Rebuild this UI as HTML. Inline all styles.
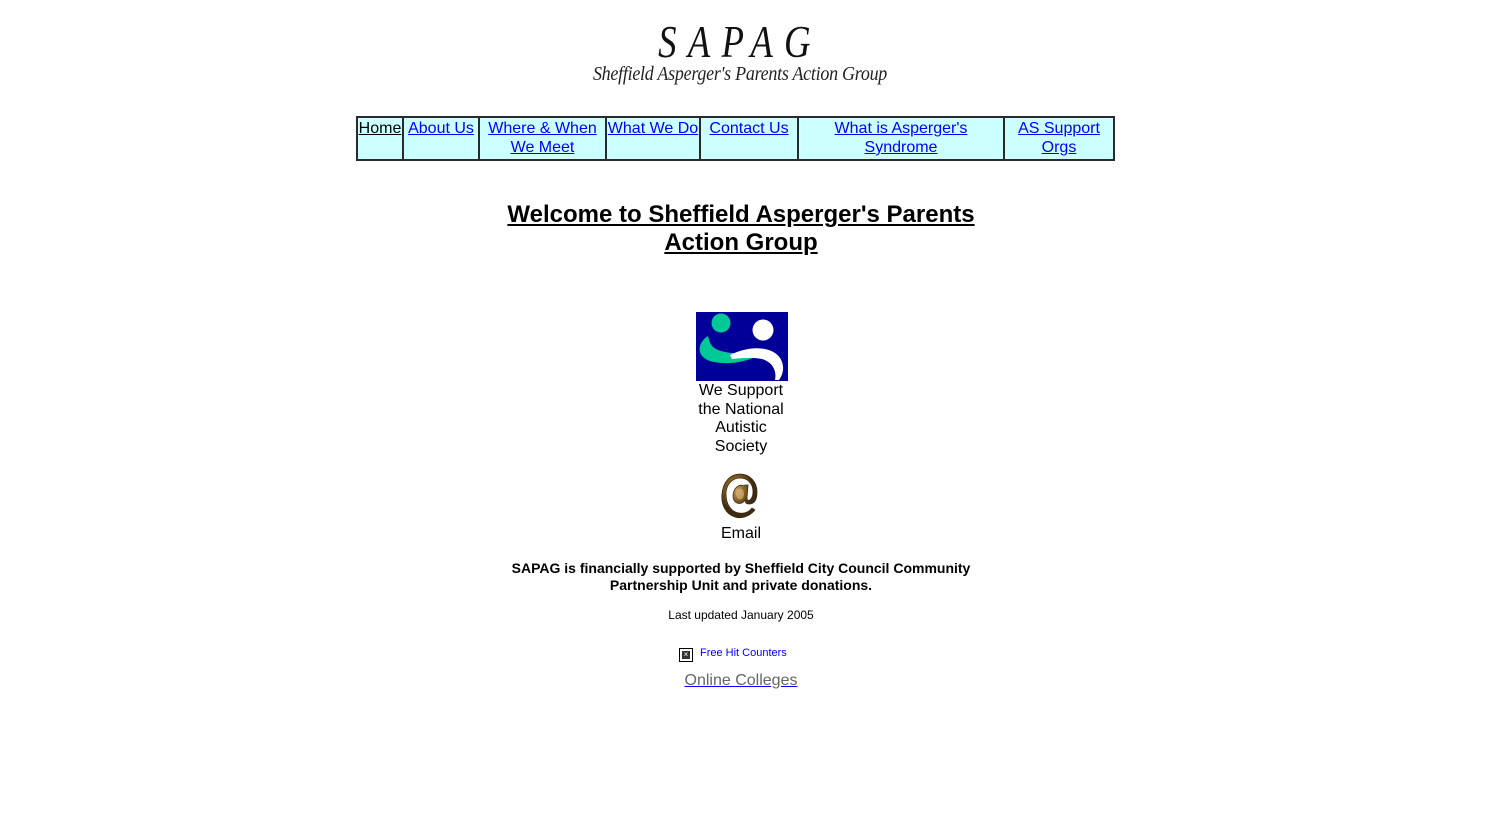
<!DOCTYPE html>
<html><head><meta charset="utf-8"><style>
body{margin:0;background:#fff;font-family:"Liberation Sans",Arial,sans-serif;width:1488px;height:825px;position:relative;overflow:hidden}
.a{position:absolute}
.c{text-align:center}
table.nav{position:absolute;left:356px;top:116px;border-collapse:collapse;background:#ccffff;height:45px}
table.nav td{border:2px solid #2a2a2a;vertical-align:top;text-align:center;font-size:16px;line-height:19px;padding:1px 0 0 0;white-space:nowrap}
table.nav a{color:#0000ff;text-decoration:underline}
</style></head><body>
<div class="a c" style="left:590px;top:14px;width:300px;font-family:'Liberation Serif',serif;font-style:italic;font-size:46px;letter-spacing:14px;line-height:56px;transform:scaleX(0.8);color:#111">SAPAG</div>
<div class="a c" style="left:550px;top:62px;width:380px;font-family:'Liberation Serif',serif;font-style:italic;font-size:20px;line-height:24px;color:#222;transform:scaleX(0.9);letter-spacing:-0.3px">Sheffield Asperger's Parents Action Group</div>
<table class="nav"><tr>
<td style="width:44px"><a style="color:#000">Home</a></td>
<td style="width:74px"><a>About Us</a></td>
<td style="width:125px"><a>Where &amp; When<br>We Meet</a></td>
<td style="width:92px"><a>What We Do</a></td>
<td style="width:96px"><a>Contact Us</a></td>
<td style="width:204px"><a>What is Asperger's<br>Syndrome</a></td>
<td style="width:108px"><a>AS Support<br>Orgs</a></td>
</tr></table>
<div class="a c" style="left:480px;top:201px;width:522px;font-weight:bold;font-size:24px;line-height:28px;text-decoration:underline">Welcome to Sheffield Asperger's Parents<br>Action Group</div>
<svg class="a" style="left:696px;top:312px" width="92" height="69" viewBox="0 0 92 69">
<rect width="92" height="69" fill="#000099"/>
<circle cx="25" cy="11" r="9.5" fill="#00c896"/>
<path d="M12 24 C2 30 -1 44 14 49 C28 53 45 51 57 46 L55 41 C40 42 24 41 17 35 C13 31 13 27 12 24 Z" fill="#00c896"/>
<circle cx="67" cy="18" r="10.5" fill="#fff"/>
<path d="M34 43 C48 36 66 33 79 41 C89 48 89 60 83 68 L79 68 C81 58 76 50 66 47 C56 45 45 46 36 47 Z" fill="#fff"/>
</svg>
<div class="a c" style="left:681px;top:382px;width:120px;font-size:16px;line-height:18.5px">We Support<br>the National<br>Autistic<br>Society</div>
<svg class="a" style="left:719px;top:472px" width="42" height="48" viewBox="0 0 42 48">
<defs><radialGradient id="g" cx="0.4" cy="0.35"><stop offset="0" stop-color="#c8a060"/><stop offset="0.6" stop-color="#7a5520"/><stop offset="1" stop-color="#3d2a10"/></radialGradient></defs>
<path d="M36 38 C30 45 22 47 16 45 C6 42 2 32 3 22 C4 10 11 2 21 2 C31 2 38 10 38 20 C38 28 35 32 30 32 C27 32 26 30 26 28 C24 31 21 32 18 31 C14 29 13 24 15 19 C17 14 22 12 25 14 L26 13 L29 13 L28 26 C28 28 29 29 31 28 C33 26 34 23 34 20 C34 11 28 6 21 6 C13 6 7 13 7 22 C7 32 12 40 20 41 C26 42 30 40 33 36 Z" fill="url(#g)" stroke="#3d2a10" stroke-width="0.8"/>
<ellipse cx="21" cy="22" rx="4" ry="5.5" fill="#e0c080" opacity="0.6"/>
</svg>
<div class="a c" style="left:681px;top:524px;width:120px;font-size:16px;line-height:19px">Email</div>
<div class="a c" style="left:470px;top:560px;width:542px;font-size:14px;font-weight:bold;line-height:17px">SAPAG is financially supported by Sheffield City Council Community<br>Partnership Unit and private donations.</div>
<div class="a c" style="left:600px;top:608px;width:282px;font-size:12px;line-height:15px">Last updated January 2005</div>
<div class="a" style="left:679px;top:648px;width:14px;height:14px;border:1px solid #000;box-sizing:border-box;background:#fff"><div style="margin:2px;width:8px;height:8px;background:#333;color:#fff;font-size:8px;line-height:8px;text-align:center">×</div></div>
<div class="a" style="left:700px;top:646px;font-size:11px;line-height:15px;color:#0000ff">Free Hit Counters</div>
<div class="a c" style="left:640px;top:671px;width:202px;font-size:16px;line-height:19px;color:#666;text-decoration:underline;text-decoration-color:#0000ff">Online Colleges</div>
</body></html>
